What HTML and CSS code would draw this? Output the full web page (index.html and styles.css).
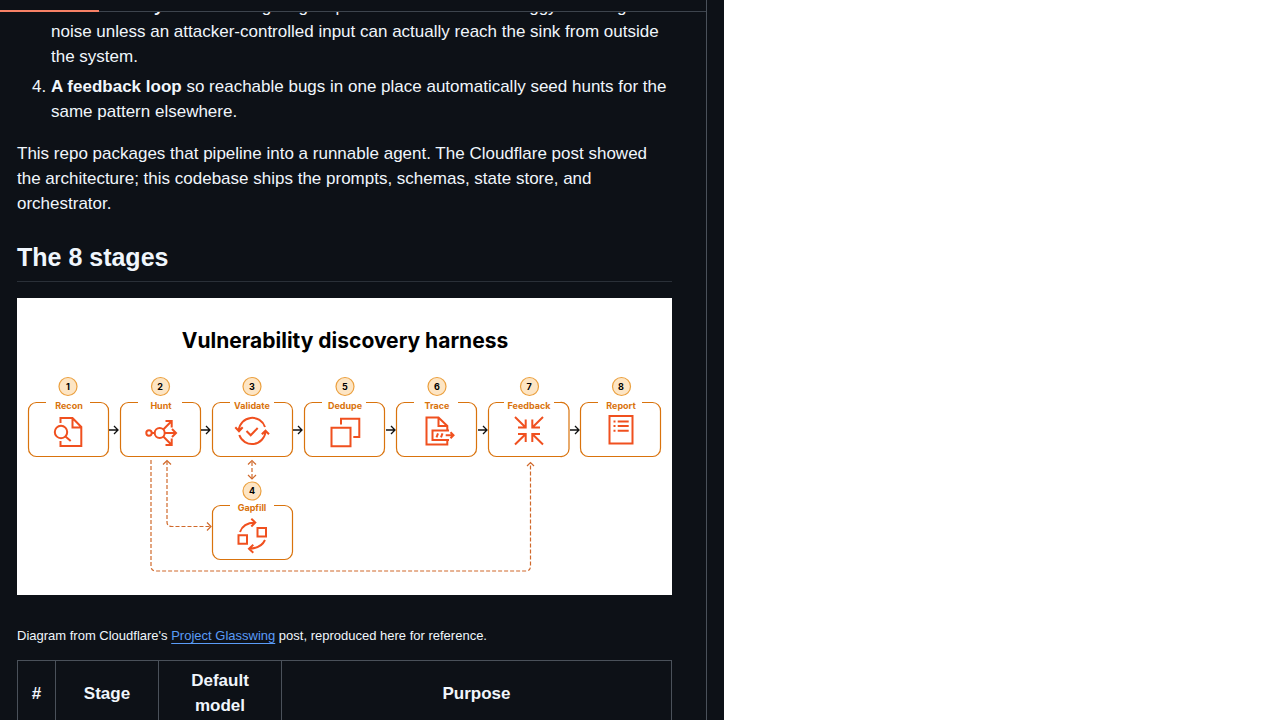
FILE: index.html
```
<!DOCTYPE html>
<html lang="en">
<head>
    <meta charset="utf-8">
    <meta name="viewport" content="width=device-width, initial-scale=1.0">
    <title>The 8 stages</title>
    <link rel="stylesheet" href="styles.css">
</head>
<body>
    <div class="page">
        <div class="panel">
            <div class="tab-bar"><div class="tab-active"></div></div>
            <article class="readme">
                <ol start="3">
                    <li><b>Trace viability</b> and not being long as possible unless it is no buggy and long<br>noise unless an attacker-controlled input can actually reach the sink from outside the system.</li>
                    <li><b>A feedback loop</b> so reachable bugs in one place automatically seed hunts for the same pattern elsewhere.</li>
                </ol>
                <p>This repo packages that pipeline into a runnable agent. The Cloudflare post showed the architecture; this codebase ships the prompts, schemas, state store, and orchestrator.</p>
                <h2>The 8 stages</h2>
                <svg class="diagram" viewBox="17 298 655 297" role="img" aria-label="Vulnerability discovery harness">
                    <defs>
                        <path id="box" d="M18 .5H9A8 8 0 0 0 .5 9V46A8 8 0 0 0 9 54.500H72A8 8 0 0 0 80.500 46V9A8 8 0 0 0 72 .5H62"/>
                        <path id="arrow" d="M0 0H9M5 -4L9 0L5 4"/>
                        <circle id="badge" r="9"/>
                    </defs>
                    <text class="title" x="345" y="348">Vulnerability discovery harness</text>

                    <g class="box">
                        <use href="#box" x="28" y="402"/>
                        <use href="#box" x="120" y="402"/>
                        <use href="#box" x="212" y="402"/>
                        <use href="#box" x="304" y="402"/>
                        <use href="#box" x="396" y="402"/>
                        <path d="M504 402.500H497A8 8 0 0 0 488.500 411V448A8 8 0 0 0 497 456.500H560A8 8 0 0 0 569 448V411A8 8 0 0 0 560 402.500H554"/>
                        <use href="#box" x="580" y="402"/>
                        <use href="#box" x="212" y="505"/>
                    </g>
                    <g class="arrow">
                        <use href="#arrow" x="109" y="430"/>
                        <use href="#arrow" x="201" y="430"/>
                        <use href="#arrow" x="293" y="430"/>
                        <use href="#arrow" x="386" y="430"/>
                        <use href="#arrow" x="478" y="430"/>
                        <use href="#arrow" x="570" y="430"/>
                    </g>
                    <g class="badge">
                        <use href="#badge" x="68" y="386.500"/>
                        <use href="#badge" x="160.500" y="386.500"/>
                        <use href="#badge" x="252" y="386.500"/>
                        <use href="#badge" x="345" y="386.500"/>
                        <use href="#badge" x="437" y="386.500"/>
                        <use href="#badge" x="529.500" y="386.500"/>
                        <use href="#badge" x="621.500" y="386.500"/>
                        <use href="#badge" x="252" y="491"/>
                    </g>
                    <g class="num">
                        <text x="68" y="390">1</text>
                        <text x="160" y="390">2</text>
                        <text x="252" y="390">3</text>
                        <text x="345" y="390">5</text>
                        <text x="437" y="390">6</text>
                        <text x="529" y="390">7</text>
                        <text x="621" y="390">8</text>
                        <text x="252" y="494">4</text>
                    </g>
                    <g class="label">
                        <text x="69" y="409">Recon</text>
                        <text x="161" y="409">Hunt</text>
                        <text x="252" y="409">Validate</text>
                        <text x="345" y="409">Dedupe</text>
                        <text x="437" y="409">Trace</text>
                        <text x="529" y="409">Feedback</text>
                        <text x="621" y="409">Report</text>
                        <text x="252" y="511">Gapfill</text>
                    </g>

                    <!-- feedback loops -->
                    <g class="loop">
                        <path class="dash" d="M151 460V566Q151 571 156 571H526Q530.500 571 530.500 566V463"/>
                        <path class="dash" d="M167 461V522Q167 526.500 172 526.500H210"/>
                        <path class="dash" d="M252 462V478"/>
                        <path d="M527 466L530.500 462.500L534 466M163 464.500L167 460.500L171 464.500M207 522.500L211 526.500L207 530.500M248 464.500L252 460.500L256 464.500M248 475L252 479L256 475"/>
                    </g>

                    <g class="icon">
                        <!-- recon -->
                        <path d="M60.500 423V418H72.500L81.300 427V446H60.500V441M72.500 418V427.500H81.300"/>
                        <circle cx="61" cy="432" r="6.200"/>
                        <path d="M65.500 436.500L70.700 441"/>
                        <!-- hunt -->
                        <circle cx="149" cy="433" r="2.700"/>
                        <circle cx="159.700" cy="433" r="5"/>
                        <path d="M151.700 433H154.700M164.700 433H176M172 429L176 433L172 437M163.300 429.500L171.700 421M165.500 421H171.700V427.500M163.300 436.500L171.700 445M165.500 445H171.700V438.500"/>
                        <!-- validate -->
                        <path d="M238.800 430A13.500 13.500 0 0 1 265 427M239.300 435A13.500 13.500 0 0 0 265.500 431.500M235.300 427.300L239 431.300L242.700 427.300M261.800 434.300L265.500 430.700L269 434.300M246.500 431L250.700 435.300L257.700 428"/>
                        <!-- dedupe -->
                        <path d="M331.500 427.700H350.500V446.300H331.500ZM341 424.500V418.700H359.300V437H353.300"/>
                        <!-- trace -->
                        <path d="M447.300 430V426L438.500 417.500H426.500V444.500H447.300V441M438.500 417.500V426H447.300M449 430.500H432.500V440H449M445.700 435.300H453M450.500 432.300L453.500 435.300L450.500 438.300M438 433.300L436.500 437.300M442.500 433.300L441 437.300"/>
                        <!-- feedback -->
                        <path d="M515 417L525.700 427.500M518 427.500H525.700V419.500M543 417L532.300 427.500M540 427.500H532.300V419.500M515 444.500L525.700 434M518 434H525.700V442M543 444.500L532.300 434M540 434H532.300V442"/>
                        <!-- report -->
                        <path d="M609.500 416H632.500V443.500H609.500ZM613.500 421.500H615.500M617.700 421.500H628.700M613.500 426H615.500M617.700 426H628.700M613.500 430.700H615.500M617.700 430.700H628.700"/>
                        <!-- gapfill -->
                        <path d="M238.500 535.300H247V543.700H238.500ZM257.500 528H266V536.500H257.500ZM240 532Q243 523 255 522.500M251.300 518.700L255.300 522.500L251.300 526.500M265 540Q261 548.500 249 548.700M253.300 544.700L249 548.700L253.300 552.700"/>
                    </g>
                </svg>
                <p class="caption">Diagram from Cloudflare's <a href="#">Project Glasswing</a> post, reproduced here for reference.</p>
                <table>
                    <thead>
                        <tr>
                            <th class="col-num">#</th>
                            <th class="col-stage">Stage</th>
                            <th class="col-model">Default model</th>
                            <th>Purpose</th>
                        </tr>
                    </thead>
                </table>
            </article>
        </div>
    </div>
</body>
</html>
```
FILE: styles.css
```
* {
    box-sizing: border-box;
}
body {
    margin: 0;
    font-family: "Liberation Sans", Arial, sans-serif;
    font-size: 17px;
    line-height: 25px;
    color: #f0f6fc;
    background-color: #fff;
}
.page {
    max-width: 724px;
    height: 100vh;
    padding-right: 17px;
    overflow: hidden;
    background-color: #0d1117;
}
.panel {
    min-height: 100%;
    border-right: 1px solid #4a515a;
}
.tab-bar {
    height: 12px;
    padding-top: 10px;
    border-bottom: 1px solid #3d444d;
}
.tab-active {
    width: 14%;
    height: 2px;
    background-color: #f78166;
}
.readme {
    padding: 0 34px 0 17px;
    overflow: hidden;
}
ol {
    margin: -18px 0 17px;
    padding-left: 34px;
}
li + li {
    margin-top: 5px;
}
p {
    margin: 0 0 25px;
}
h2 {
    margin: 0 0 16px;
    padding-bottom: 8px;
    font-size: 25px;
    line-height: 32px;
    border-bottom: 1px solid #2a3038;
}
.diagram {
    display: block;
    width: 100%;
    background-color: #fff;
    font-family: Inter, sans-serif;
    text-anchor: middle;
}
.title {
    font-size: 21px;
    font-weight: 700;
}
.box {
    fill: none;
    stroke: #d9730d;
    stroke-width: 1.2;
}
.arrow {
    fill: none;
    stroke: #111;
    stroke-width: 1.3;
}
.badge {
    fill: #fde5c4;
    stroke: #eba03f;
    stroke-width: 1.2;
}
.num {
    font-size: 9px;
    font-weight: 700;
}
.label {
    font-size: 9px;
    font-weight: 700;
    fill: #d9730d;
}
.loop {
    fill: none;
    stroke: #d0692b;
    stroke-width: 1.2;
}
.dash {
    stroke-dasharray: 4 2;
}
.icon {
    fill: none;
    stroke: #f0501f;
    stroke-width: 2;
}
.caption {
    margin: 28px 0 12px;
    font-size: 13px;
}
a {
    color: #5a9cf8;
    text-decoration: underline;
    text-underline-offset: 3px;
}
table {
    width: 100%;
    table-layout: fixed;
    border-collapse: collapse;
}
th {
    padding: 7px 14px;
    border: 1px solid #4a515a;
}
.col-num {
    width: 38px;
    padding: 7px 0;
}
.col-stage {
    width: 103px;
}
.col-model {
    width: 123px;
}
```
